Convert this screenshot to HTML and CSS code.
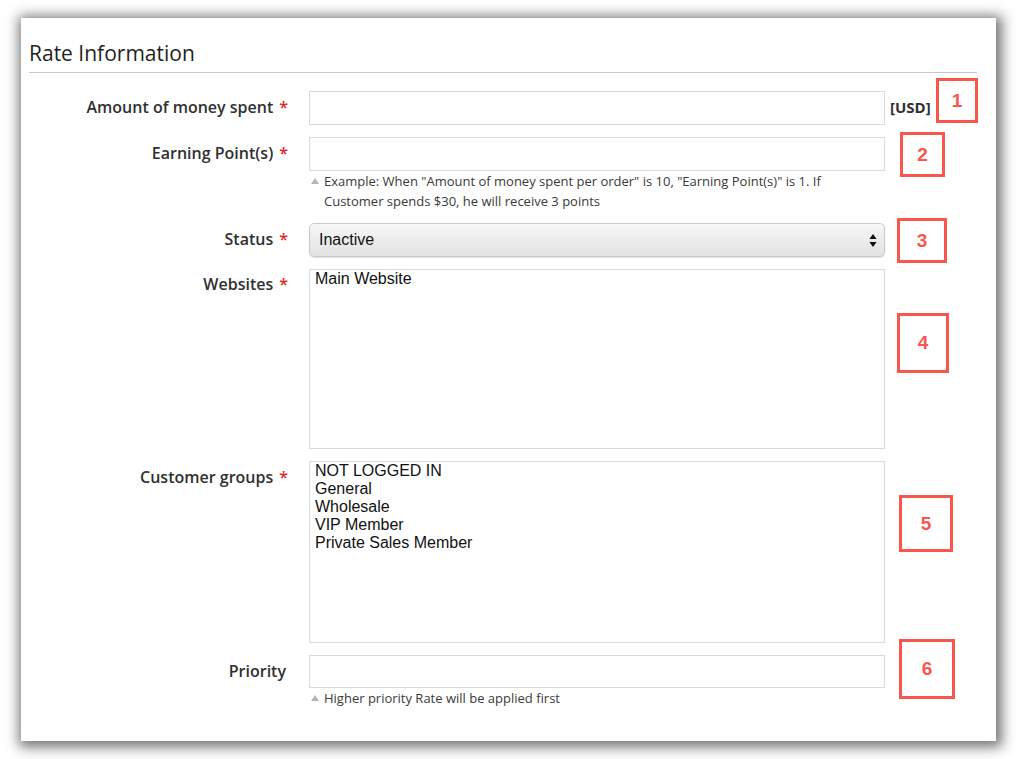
FILE: index.html
```html
<!DOCTYPE html>
<html lang="en">
<head>
<meta charset="utf-8">
<title>Rate Information</title>
<link rel="stylesheet" href="styles.css">
</head>
<body>
<div class="window">
  <h2 class="legend">Rate Information</h2>
  <div class="form">
    <div class="row">
      <div class="label">Amount of money spent<span class="req">*</span></div>
      <div class="control"><div class="input"></div></div>
      <div class="addon">[USD]</div>
      <div class="mark mark-1">1</div>
    </div>
    <div class="row">
      <div class="label">Earning Point(s)<span class="req">*</span></div>
      <div class="control">
        <div class="input"></div>
        <div class="note"><span class="tri"></span><p>Example: When "Amount of money spent per order" is 10, "Earning Point(s)" is 1. If Customer spends $30, he will receive 3 points</p></div>
      </div>
      <div class="mark mark-2">2</div>
    </div>
    <div class="row">
      <div class="label">Status<span class="req">*</span></div>
      <div class="control">
        <div class="select"><span>Inactive</span>
          <svg class="arrows" width="8" height="13" viewBox="0 0 8 13"><path d="M4 0 L7.6 5 L0.4 5 Z M4 13 L7.6 8 L0.4 8 Z" fill="#111"/></svg>
        </div>
      </div>
      <div class="mark mark-3">3</div>
    </div>
    <div class="row">
      <div class="label label-tall">Websites<span class="req">*</span></div>
      <div class="control">
        <div class="multi multi-web"><div class="opt">Main Website</div></div>
      </div>
      <div class="mark mark-4">4</div>
    </div>
    <div class="row">
      <div class="label">Customer groups<span class="req">*</span></div>
      <div class="control">
        <div class="multi multi-groups">
          <div class="opt">NOT LOGGED IN</div>
          <div class="opt">General</div>
          <div class="opt">Wholesale</div>
          <div class="opt">VIP Member</div>
          <div class="opt">Private Sales Member</div>
        </div>
      </div>
      <div class="mark mark-5">5</div>
    </div>
    <div class="row">
      <div class="label">Priority</div>
      <div class="control">
        <div class="input input-short"></div>
        <div class="note"><span class="tri"></span><p>Higher priority Rate will be applied first</p></div>
      </div>
      <div class="mark mark-6">6</div>
    </div>
  </div>
</div>
</body>
</html>
```
FILE: styles.css
```css
html, body {
  margin: 0;
  padding: 0;
  background: #ffffff;
}
body {
  height: 759px;
  overflow: hidden;
  padding-top: 18px;
  box-sizing: border-box;
  font-family: "Open Sans", "Liberation Sans", sans-serif;
  color: #303030;
}
.window {
  margin: 0 0 0 21px;
  width: 975px;
  height: 723px;
  background: #ffffff;
  box-shadow: 2px 2px 12px 4px rgba(0, 0, 0, 0.55);
  overflow: hidden;
}
.legend {
  margin: 21px 19px 0 8px;
  padding: 0 0 5px 0;
  font-size: 21px;
  line-height: 28px;
  font-weight: 400;
  color: #1f1f1f;
  border-bottom: 1px solid #c8c8c8;
}
.form {
  margin-top: 18px;
  display: flex;
  flex-direction: column;
  gap: 12px;
}
.row {
  position: relative;
  display: grid;
  grid-template-columns: 265px 576px auto;
  column-gap: 23px;
  align-items: start;
}
.label {
  text-align: right;
  font-size: 16px;
  font-weight: 600;
  line-height: 20px;
  padding-top: 6px;
  color: #303030;
  white-space: nowrap;
}
.label-tall {
  padding-top: 5px;
}
.req {
  color: #e22626;
  font-size: 16px;
  margin-left: 6px;
  margin-right: -2px;
}
.control {
  display: flex;
  flex-direction: column;
}
.input {
  height: 32px;
  border: 1px solid #d9d9e0;
  background: #fff;
}
.input-short {
  height: 31px;
}
.addon {
  margin-left: -18px;
  font-size: 15px;
  font-weight: 700;
  line-height: 20px;
  padding-top: 6px;
  color: #303030;
}
.note {
  display: flex;
  align-items: flex-start;
  font-size: 13px;
  line-height: 20px;
  color: #3a3a3a;
}
.note p {
  margin: 0;
  width: 545px;
}
.tri {
  width: 0;
  height: 0;
  margin: 7px 5px 0 2px;
  border-left: 4px solid transparent;
  border-right: 4px solid transparent;
  border-bottom: 6px solid #b5b5b5;
  flex: none;
}
.select {
  position: relative;
  height: 32px;
  border: 1px solid #c9c9c9;
  border-radius: 5px;
  background: linear-gradient(#f7f7f7, #e2e2e2);
  box-shadow: 0 1px 1px rgba(0, 0, 0, 0.12);
  display: flex;
  align-items: center;
  justify-content: space-between;
  padding: 0 7px 0 9px;
  font-family: "Liberation Sans", Arial, sans-serif;
  font-size: 16px;
  color: #111;
}
.arrows {
  display: block;
}
.multi {
  border: 1px solid #d9d9e0;
  background: #fff;
  padding: 0 5px;
  font-family: "Liberation Sans", Arial, sans-serif;
  font-size: 16px;
  color: #111;
}
.multi-web {
  height: 178px;
}
.multi-groups {
  height: 180px;
}
.opt {
  line-height: 18px;
}
.mark {
  position: absolute;
  box-sizing: border-box;
  border: 3px solid #f9574b;
  color: #f9574b;
  font-family: "Liberation Sans", Arial, sans-serif;
  font-weight: 700;
  font-size: 19px;
  display: flex;
  align-items: center;
  justify-content: center;
  background: #fff;
}
.mark-1 { left: 915px; top: -13px; width: 42px; height: 45px; }
.mark-2 { left: 879px; top: -5px; width: 45px; height: 45px; }
.mark-3 { left: 876px; top: -5px; width: 50px; height: 45px; }
.mark-4 { left: 876px; top: 44px; width: 52px; height: 60px; }
.mark-5 { left: 878px; top: 34px; width: 54px; height: 57px; }
.mark-6 { left: 878px; top: -16px; width: 56px; height: 60px; }
```
